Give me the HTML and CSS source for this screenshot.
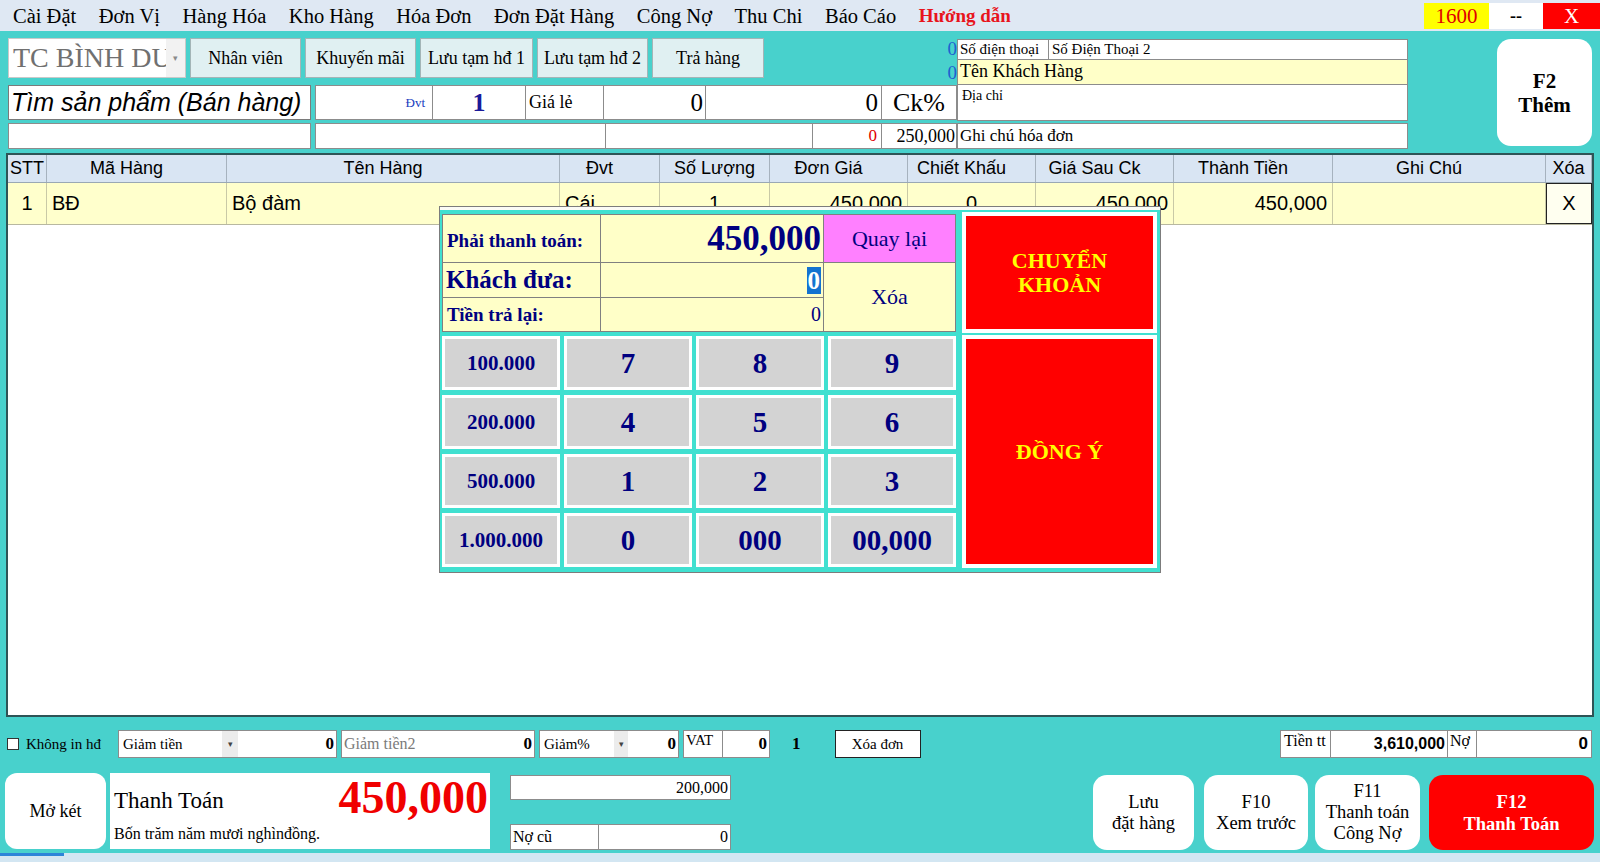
FILE: index.html
```html
<!DOCTYPE html>
<html lang="vi">
<head>
<meta charset="utf-8">
<title>Bán hàng</title>
<link rel="stylesheet" href="styles.css">
</head>
<body>
<div class="app">
  <header class="menubar">
    <nav class="menu">
      <span>Cài Đặt</span><span>Đơn Vị</span><span>Hàng Hóa</span><span>Kho Hàng</span><span>Hóa Đơn</span><span>Đơn Đặt Hàng</span><span>Công Nợ</span><span>Thu Chi</span><span>Báo Cáo</span><span class="guide">Hướng dẫn</span>
    </nav>
    <div class="winctl"><span class="wc-num">1600</span><span class="wc-min">--</span><span class="wc-close">X</span></div>
  </header>

  <main class="main">
    <section class="top">
      <div class="left-stack">
        <div class="row-a">
          <div class="store"><span class="store-text">TC BÌNH DU</span><span class="caret">▾</span></div>
          <button class="tbtn w111">Nhân viên</button>
          <button class="tbtn w111">Khuyến mãi</button>
          <button class="tbtn w113">Lưu tạm hđ 1</button>
          <button class="tbtn w111">Lưu tạm hđ 2</button>
          <button class="tbtn w112">Trả hàng</button>
          <div class="zeros"><span class="z1">0</span><span class="z2">0</span></div>
        </div>
        <div class="row-b">
          <div class="search">Tìm sản phẩm (Bán hàng)</div>
          <div class="c b-dvt first">Đvt</div>
          <div class="c b-qty">1</div>
          <div class="c b-gia">Giá lẻ</div>
          <div class="c b-v1">0</div>
          <div class="c b-v2">0</div>
          <div class="c b-ck">Ck%</div>
        </div>
        <div class="row-c">
          <div class="c c1 first"></div>
          <div class="c c2 first"></div>
          <div class="c c3"></div>
          <div class="c c4">0</div>
          <div class="c c5">250,000</div>
        </div>
      </div>
      <div class="info">
        <div class="i-phone"><span class="i-p1">Số điện thoại</span><span class="i-p2">Số Điện Thoại 2</span></div>
        <div class="i-name">Tên Khách Hàng</div>
        <div class="i-addr">Địa chỉ</div>
        <div class="i-note">Ghi chú hóa đơn</div>
      </div>
      <button class="f2">F2<br>Thêm</button>
    </section>

    <section class="grid">
      <div class="g-head">
        <span>STT</span><span class="sh">Mã Hàng</span><span class="sh">Tên Hàng</span><span class="sh">Đvt</span><span>Số Lượng</span><span class="sh">Đơn Giá</span><span class="sh">Chiết Khấu</span><span class="sh">Giá Sau Ck</span><span class="sh">Thành Tiền</span><span class="sh">Ghi Chú</span><span>Xóa</span>
      </div>
      <div class="g-row">
        <span class="ctr">1</span><span>BĐ</span><span>Bộ đàm</span><span>Cái</span><span class="ctr">1</span><span class="rt">450,000</span><span class="ctr">0</span><span class="rt">450,000</span><span class="rt">450,000</span><span></span><span class="ctr del">X</span>
      </div>
    </section>

    <section class="bar1">
      <label class="chk"><span class="box"></span>Không in hđ</label>
      <div class="fld f-gt"><span class="f-lbl">Giảm tiền</span><span class="f-arrow">▾</span><span class="f-val">0</span></div>
      <div class="fld f-gt2"><span class="f-ph">Giảm tiền2</span><span class="f-val">0</span></div>
      <div class="fld f-gp"><span class="f-lbl">Giảm%</span><span class="f-arrow">▾</span><span class="f-val">0</span></div>
      <div class="fld f-vat"><span class="f-vl">VAT</span><span class="f-val f-vv">0</span></div>
      <span class="one">1</span>
      <button class="xoadon">Xóa đơn</button>
      <div class="totals">
        <span class="t-l1">Tiền tt</span><span class="t-v1">3,610,000</span><span class="t-l2">Nợ</span><span class="t-v2">0</span>
      </div>
    </section>

    <section class="bar2">
      <button class="mk">Mở két</button>
      <div class="paypanel">
        <div class="pp-top"><span class="pp-lbl">Thanh Toán</span><span class="pp-amt">450,000</span></div>
        <div class="pp-words">Bốn trăm năm mươi nghìnđồng.</div>
      </div>
      <div class="dues">
        <div class="d-given">200,000</div>
        <div class="d-old"><span class="d-ol">Nợ cũ</span><span class="d-ov">0</span></div>
      </div>
      <div class="actions">
        <button class="act a1">Lưu<br>đặt hàng</button>
        <button class="act a2">F10<br>Xem trước</button>
        <button class="act a3">F11<br>Thanh toán<br>Công Nợ</button>
        <button class="act a4">F12<br>Thanh Toán</button>
      </div>
    </section>
  </main>
  <div class="taskstrip"><span></span></div>

  <div class="pay">
    <div class="pay-left">
      <div class="ptab">
        <div class="pc lbl1">Phải thanh toán:</div>
        <div class="pc val1">450,000</div>
        <div class="pc back">Quay lại</div>
        <div class="pc lbl2">Khách đưa:</div>
        <div class="pc val2"><span class="sel">0</span></div>
        <div class="pc clr">Xóa</div>
        <div class="pc lbl3">Tiền trả lại:</div>
        <div class="pc val3">0</div>
      </div>
      <div class="keys">
        <div class="key money">100.000</div><div class="key">7</div><div class="key">8</div><div class="key">9</div>
        <div class="key money">200.000</div><div class="key">4</div><div class="key">5</div><div class="key">6</div>
        <div class="key money">500.000</div><div class="key">1</div><div class="key">2</div><div class="key">3</div>
        <div class="key money">1.000.000</div><div class="key">0</div><div class="key">000</div><div class="key">00,000</div>
      </div>
    </div>
    <div class="pay-right">
      <div class="red ck">CHUYỂN<br>KHOẢN</div>
      <div class="red ok">ĐỒNG Ý</div>
    </div>
  </div>
</div>
</body>
</html>
```

FILE: styles.css
```css
* { box-sizing: border-box; margin: 0; padding: 0; }
html, body { width: 1600px; height: 862px; overflow: hidden; }
body { font-family: "Liberation Serif", "Times New Roman", serif; color: #000; background: #48d1cc; }
button { font-family: inherit; color: inherit; cursor: default; }
.app { position: relative; width: 1600px; height: 862px; }

/* menu */
.menubar { height: 31px; background: #dfe8f3; display: flex; align-items: center; padding-left: 13px; }
.menu { display: flex; gap: 22.6px; font-size: 20.5px; line-height: 24px; white-space: nowrap; }
.guide { color: #e8141c; font-weight: bold; font-size: 19px; }
.winctl { margin-left: auto; align-self: flex-start; margin-top: 3px; display: flex; height: 26px; font-size: 21px; line-height: 26px; text-align: center; }
.wc-num { width: 65px; background: #ffff00; color: #e00000; }
.wc-min { width: 54px; background: #fff; font-weight: bold; font-size: 18px; }
.wc-close { width: 57px; background: #ff0000; color: #fff; }

/* main */
.main { height: 822px; padding-top: 7px; background: #48d1cc; }
.top { display: flex; height: 111px; padding: 0 8px; }
.left-stack { width: 949px; display: flex; flex-direction: column; }
.row-a { display: flex; height: 41px; gap: 4px; }
.store { width: 178px; height: 40px; display: flex; background: #f2f2f2; border: 1px solid #c9c9c9; }
.store-text { width: 157px; background: #fff; font-size: 28px; color: #707070; white-space: nowrap; overflow: hidden; line-height: 38px; padding-left: 4px; }
.caret { flex: 1; font-size: 9px; color: #8a8a8a; display: flex; align-items: center; justify-content: center; }
.tbtn { height: 40px; background: #e0f0f2; border: 1px solid #a3b5b7; font-size: 18px; }
.w111 { width: 111px; } .w112 { width: 112px; } .w113 { width: 113px; }
.zeros { margin-left: auto; display: flex; flex-direction: column; align-items: flex-end; color: #1f5fd0; font-size: 19px; }
.z1 { height: 22px; line-height: 22px; }
.z2 { height: 25px; line-height: 25px; }

.row-b { display: flex; height: 35px; margin-top: 6px; }
.c { background: #fff; border: 1px solid #8c8c8c; border-left: none; height: 100%; display: flex; align-items: center; white-space: nowrap; overflow: hidden; }
.c.first { border-left: 1px solid #8c8c8c; }
.search { width: 303px; margin-right: 4px; background: #fff; border: 1px solid #7a7a7a; font-family: "Liberation Sans", Arial, sans-serif; font-style: italic; font-size: 25px; line-height: 33px; padding-left: 2px; white-space: nowrap; overflow: hidden; }
.b-dvt { width: 118px; justify-content: flex-end; padding-right: 7px; font-size: 13px; color: #2040c0; }
.b-qty { width: 93px; justify-content: center; font-size: 26px; font-weight: bold; color: #1a1a9a; }
.b-gia { width: 78px; padding-left: 3px; font-size: 18px; }
.b-v1 { width: 102px; justify-content: flex-end; padding-right: 2px; font-size: 25px; }
.b-v2 { width: 176px; justify-content: flex-end; padding-right: 3px; font-size: 25px; }
.b-ck { width: 75px; justify-content: center; font-size: 26px; }

.row-c { display: flex; height: 26px; margin-top: 3px; }
.c1 { width: 303px; margin-right: 4px; }
.c2 { width: 291px; }
.c3 { width: 207px; }
.c4 { width: 69px; justify-content: flex-end; padding-right: 4px; color: #e00000; font-size: 17px; }
.c5 { width: 75px; justify-content: flex-end; padding-right: 1px; font-size: 18px; }

.info { width: 451px; margin-top: 1px; display: flex; flex-direction: column; }
.i-phone { height: 21px; display: flex; background: #fff; border: 1px solid #8c8c8c; font-size: 15px; line-height: 19px; }
.i-p1 { width: 91px; padding-left: 2px; border-right: 1px solid #8c8c8c; white-space: nowrap; }
.i-p2 { flex: 1; padding-left: 3px; }
.i-name { height: 25px; background: #ffffc8; border: 1px solid #8c8c8c; border-top: none; font-size: 18px; line-height: 23px; padding-left: 2px; }
.i-addr { height: 36px; background: #fff; border: 1px solid #8c8c8c; border-top: none; font-size: 14px; line-height: 18px; padding: 2px 0 0 4px; }
.i-note { height: 26px; margin-top: 2px; background: #fff; border: 1px solid #8c8c8c; font-size: 17px; line-height: 24px; padding-left: 2px; }
.f2 { margin-left: auto; margin-top: 1px; width: 95px; height: 107px; background: #fff; border: none; border-radius: 14px; font-weight: bold; font-size: 21px; line-height: 24px; }

/* grid */
.grid { margin: 4px 6px 0; height: 564px; border: 2px solid #2e5456; background: #fff; font-family: "Liberation Sans", Arial, sans-serif; }
.g-head, .g-row { display: grid; grid-template-columns: 39px 180px 333px 100px 110px 138px 128px 138px 159px 213px 46px; }
.g-head { height: 28px; background: #d9e5f3; border-bottom: 1px solid #9aa8b4; }
.g-head span { border-right: 1px solid #a6b2be; font-size: 18px; line-height: 27px; text-align: center; white-space: nowrap; }
.g-head .sh { padding-right: 20px; }
.g-row { height: 42px; background: #ffffcc; border-bottom: 1px solid #b8b8a0; }
.g-row span { border-right: 1px solid #c9c9a6; font-size: 20px; line-height: 41px; padding: 0 5px; white-space: nowrap; overflow: hidden; }
.g-row .ctr { text-align: center; }
.g-row .rt { text-align: right; }
.g-row .del { border: 1px solid #222; background: #fffff0; line-height: 39px; }

/* bar1 */
.bar1 { display: flex; height: 28px; margin-top: 13px; padding: 0 8px 0 7px; align-items: stretch; }
.chk { width: 111px; display: flex; align-items: center; gap: 7px; font-size: 15px; }
.box { width: 12px; height: 12px; border: 1px solid #333; background: #fff; }
.fld { display: flex; background: #fff; border: 1px solid #8c8c8c; margin-right: 4px; font-size: 15px; align-items: center; }
.f-lbl { padding-left: 4px; white-space: nowrap; }
.f-gt { width: 219px; }
.f-gt .f-lbl { width: 103px; }
.f-arrow { width: 16px; align-self: stretch; background: #ececec; font-size: 9px; color: #444; display: flex; align-items: center; justify-content: center; }
.f-val { flex: 1; text-align: right; font-weight: bold; font-size: 17px; padding-right: 2px; }
.f-gt2 { width: 194px; }
.f-ph { padding-left: 2px; color: #7a7a7a; font-size: 16px; white-space: nowrap; }
.f-gp { width: 140px; }
.f-gp .f-lbl { width: 74px; }
.f-gp .f-arrow { width: 14px; }
.f-vat { width: 87px; align-items: stretch; }
.f-vl { width: 39px; border-right: 1px solid #8c8c8c; padding-left: 2px; line-height: 18px; }
.f-vv { display: flex; align-items: center; justify-content: flex-end; }
.one { margin-left: 18px; font-weight: bold; font-size: 17px; display: flex; align-items: center; }
.xoadon { margin-left: 34px; width: 86px; background: #fff; border: 1px solid #222; font-size: 15px; }
.totals { margin-left: auto; display: flex; background: #fff; border: 1px solid #8c8c8c; }
.totals span { border-right: 1px solid #8c8c8c; white-space: nowrap; }
.totals span:last-child { border-right: none; }
.t-l1 { width: 50px; font-size: 16px; padding-left: 3px; line-height: 20px; }
.t-v1 { width: 117px; text-align: right; font-family: "Liberation Sans", Arial, sans-serif; font-weight: bold; font-size: 16px; line-height: 26px; padding-right: 2px; }
.t-l2 { width: 29px; font-size: 16px; padding-left: 2px; line-height: 20px; }
.t-v2 { width: 114px; text-align: right; font-family: "Liberation Sans", Arial, sans-serif; font-weight: bold; font-size: 17px; line-height: 26px; padding-right: 3px; }

/* bar2 */
.bar2 { display: flex; height: 77px; margin-top: 15px; padding: 0 6px 0 5px; }
.mk { width: 101px; height: 76px; background: #fff; border: none; border-radius: 12px; font-size: 18px; }
.paypanel { margin-left: 4px; width: 380px; height: 76px; background: #fff; display: flex; flex-direction: column; padding: 0 2px 0 4px; }
.pp-top { display: flex; justify-content: space-between; align-items: center; height: 50px; }
.pp-lbl { font-size: 23px; margin-top: 5px; }
.pp-amt { color: #f00000; font-weight: bold; font-size: 46px; line-height: 48px; }
.pp-words { font-size: 16px; line-height: 20px; margin-top: 1px; }
.dues { margin-left: 20px; width: 221px; display: flex; flex-direction: column; padding-top: 2px; }
.d-given { height: 25px; background: #fff; border: 1px solid #8c8c8c; text-align: right; font-size: 16px; line-height: 23px; padding-right: 2px; }
.d-old { margin-top: auto; height: 26px; display: flex; background: #fff; border: 1px solid #8c8c8c; font-size: 16px; line-height: 24px; }
.d-ol { width: 88px; border-right: 1px solid #8c8c8c; padding-left: 2px; }
.d-ov { flex: 1; text-align: right; padding-right: 2px; }
.actions { margin-left: auto; display: flex; padding-top: 2px; }
.act { height: 75px; background: #fff; border: none; border-radius: 14px; font-size: 18.5px; line-height: 21px; }
.a1 { width: 101px; }
.a2 { width: 104px; margin-left: 10px; }
.a3 { width: 105px; margin-left: 7px; }
.a4 { width: 165px; margin-left: 9px; background: #ff0000; color: #fff; font-weight: bold; font-size: 18.5px; line-height: 22px; }

.taskstrip { height: 9px; background: #d3e6f2; }
.taskstrip span { display: block; width: 64px; height: 3px; background: #2d84d8; }

/* payment popup */
.pay { position: absolute; left: 439px; top: 206px; width: 722px; height: 367px; border: 1px solid #7c7c7c; background: linear-gradient(#fbfbf6 0, #fbfbf6 3px, #40e0d0 3px); padding: 5px 3px 0 2px; display: flex; gap: 6px; }
.pay-left { width: 514px; margin-top: 2px; }
.ptab { display: grid; grid-template-columns: 157px 222px 131px; grid-template-rows: 47px 34px 33px; gap: 1px; background: #808080; border: 1px solid #808080; height: 118px; color: #000080; }
.pc { background: #ffffc8; display: flex; align-items: center; white-space: nowrap; }
.lbl1, .lbl3 { font-weight: bold; font-size: 19px; padding-left: 4px; }
.lbl1 { padding-top: 4px; }
.lbl2 { font-weight: bold; font-size: 25px; padding-left: 3px; }
.val1 { justify-content: flex-end; font-weight: bold; font-size: 35px; padding-right: 2px; }
.back { background: #ff80ff; justify-content: center; font-size: 22px; }
.val2 { justify-content: flex-end; padding-right: 2px; }
.sel { background: #1473d0; color: #fff; font-weight: bold; font-size: 25px; line-height: 27px; padding: 0 1px; }
.clr { grid-column: 3; grid-row: 2 / 4; justify-content: center; font-size: 22px; }
.val3 { justify-content: flex-end; font-size: 20px; padding-right: 2px; }
.keys { display: grid; grid-template-columns: 118px repeat(3, 1fr); column-gap: 4px; row-gap: 5px; margin-top: 4px; }
.key { height: 54px; background: #d3d3d3; border: 3px solid #fff; color: #000080; font-weight: bold; font-size: 29px; display: flex; align-items: center; justify-content: center; }
.key.money { font-size: 21px; }
.pay-right { width: 195px; display: flex; flex-direction: column; gap: 2px; }
.red { background: #ff0000; border: 4px solid #fff; color: #ffff00; font-weight: bold; font-size: 22px; line-height: 24px; display: flex; align-items: center; justify-content: center; text-align: center; }
.ck { height: 121px; }
.ok { height: 233px; }
```
